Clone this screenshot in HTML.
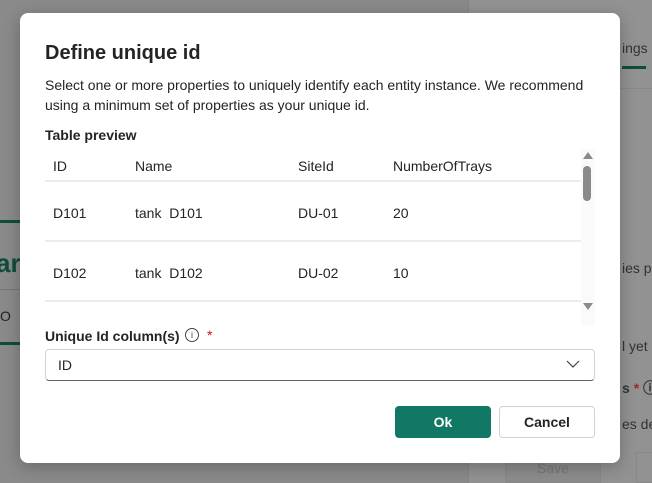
<!DOCTYPE html>
<html><head><meta charset="utf-8"><style>
*{box-sizing:border-box;margin:0;padding:0}
body{width:652px;height:483px;overflow:hidden;background:#8a8a8a;font-family:"Liberation Sans",sans-serif;position:relative;color:#242424}
.rp{position:absolute;left:468px;top:0;width:184px;height:483px;background:#929292}
.abs{position:absolute}
.dlg{position:absolute;left:20px;top:13px;width:600px;height:450px;background:#fff;border-radius:8px;box-shadow:0 4px 16px rgba(0,0,0,.25)}
.t{position:absolute;white-space:nowrap}
</style></head><body>
<div class="rp"></div>
<div class="abs" style="left:468px;top:0;width:1px;height:483px;background:#858585"></div>
<div class="abs" style="left:490px;top:88px;width:162px;height:1px;background:#888"></div>
<div class="t" style="left:622px;top:40px;font-size:14px;color:#333">ings</div>
<div class="abs" style="left:622px;top:66px;width:24px;height:3px;background:#0e4d3b"></div>
<div class="t" style="left:622px;top:260px;font-size:14px;color:#333">ies pr</div>
<div class="t" style="left:622px;top:338px;font-size:14px;color:#333">l yet</div>
<div class="t" style="left:622px;top:378px;font-size:14px;color:#333;font-weight:bold">s <span style="color:#a4262c">*</span> ⓘ</div>
<div class="t" style="left:622px;top:416px;font-size:14px;color:#333">es de</div>
<div class="abs" style="left:505px;top:452px;width:96px;height:31px;background:#8c8c8c;border:1px solid #888"></div>
<div class="t" style="left:537px;top:460px;font-size:14px;color:#777">Save</div>
<div class="abs" style="left:636px;top:452px;width:16px;height:31px;border:1px solid #888;border-right:none"></div>
<div class="abs" style="left:0;top:220px;width:20px;height:3px;background:#0e4d3b"></div>
<div class="t" style="left:-4px;top:248px;font-size:26px;font-weight:bold;color:#0e4d3b">ar</div>
<div class="abs" style="left:0;top:289px;width:20px;height:1px;background:#777"></div>
<div class="t" style="left:0;top:308px;font-size:14px;color:#222">O</div>
<div class="abs" style="left:0;top:342px;width:20px;height:3px;background:#0e4d3b"></div>

<div class="dlg">
<div class="t" style="left:25px;top:29px;font-size:20px;font-weight:bold;color:#242424">Define unique id</div>
<div class="t" style="left:25px;top:62px;font-size:14px;line-height:20px;white-space:normal;width:570px;color:#242424">Select one or more properties to uniquely identify each entity instance. We recommend using a minimum set of properties as your unique id.</div>
<div class="t" style="left:25px;top:114px;font-size:14px;font-weight:bold">Table preview</div>
<div class="t" style="left:33px;top:145px;font-size:14px">ID</div>
<div class="t" style="left:115px;top:145px;font-size:14px">Name</div>
<div class="t" style="left:278px;top:145px;font-size:14px">SiteId</div>
<div class="t" style="left:373px;top:145px;font-size:14px">NumberOfTrays</div>
<div class="abs" style="left:25px;top:167px;width:536px;height:2px;background:#ececec"></div>
<div class="t" style="left:33px;top:192px;font-size:14px">D101</div>
<div class="t" style="left:115px;top:192px;font-size:14px">tank&nbsp; D101</div>
<div class="t" style="left:278px;top:192px;font-size:14px">DU-01</div>
<div class="t" style="left:373px;top:192px;font-size:14px">20</div>
<div class="abs" style="left:25px;top:227px;width:536px;height:2px;background:#ececec"></div>
<div class="t" style="left:33px;top:252px;font-size:14px">D102</div>
<div class="t" style="left:115px;top:252px;font-size:14px">tank&nbsp; D102</div>
<div class="t" style="left:278px;top:252px;font-size:14px">DU-02</div>
<div class="t" style="left:373px;top:252px;font-size:14px">10</div>
<div class="abs" style="left:25px;top:287px;width:536px;height:2px;background:#ececec"></div>
<div class="abs" style="left:561px;top:136px;width:14px;height:176px;background:#fafafa"></div>
<div class="abs" style="left:563px;top:139px;width:0;height:0;border-left:5px solid transparent;border-right:5px solid transparent;border-bottom:7px solid #8a8a8a"></div>
<div class="abs" style="left:563px;top:153px;width:8px;height:35px;border-radius:4px;background:#8a8a8a"></div>
<div class="abs" style="left:563px;top:290px;width:0;height:0;border-left:5px solid transparent;border-right:5px solid transparent;border-top:7px solid #8a8a8a"></div>
<div class="t" style="left:25px;top:315px;font-size:14px;font-weight:bold">Unique Id column(s)</div>
<div class="abs" style="left:165px;top:315px;width:14px;height:14px;border:1px solid #444;border-radius:50%;font-size:9px;text-align:center;line-height:12px;color:#444">i</div>
<div class="t" style="left:187px;top:314px;font-size:14px;color:#c50f1f">*</div>
<div class="abs" style="left:25px;top:336px;width:550px;height:32px;border:1px solid #d1d1d1;border-bottom:1px solid #616161;border-radius:4px"></div>
<div class="t" style="left:38px;top:344px;font-size:14px">ID</div>
<svg class="abs" style="left:546px;top:346px" width="14" height="10"><path d="M1 2 L7 8 L13 2" fill="none" stroke="#424242" stroke-width="1.2"/></svg>
<div class="abs" style="left:375px;top:393px;width:96px;height:32px;background:#117865;border-radius:4px;color:#fff;font-weight:bold;font-size:14px;text-align:center;line-height:32px">Ok</div>
<div class="abs" style="left:479px;top:393px;width:96px;height:32px;background:#fff;border:1px solid #d1d1d1;border-radius:4px;font-weight:bold;font-size:14px;text-align:center;line-height:30px">Cancel</div>
</div>
</body></html>
